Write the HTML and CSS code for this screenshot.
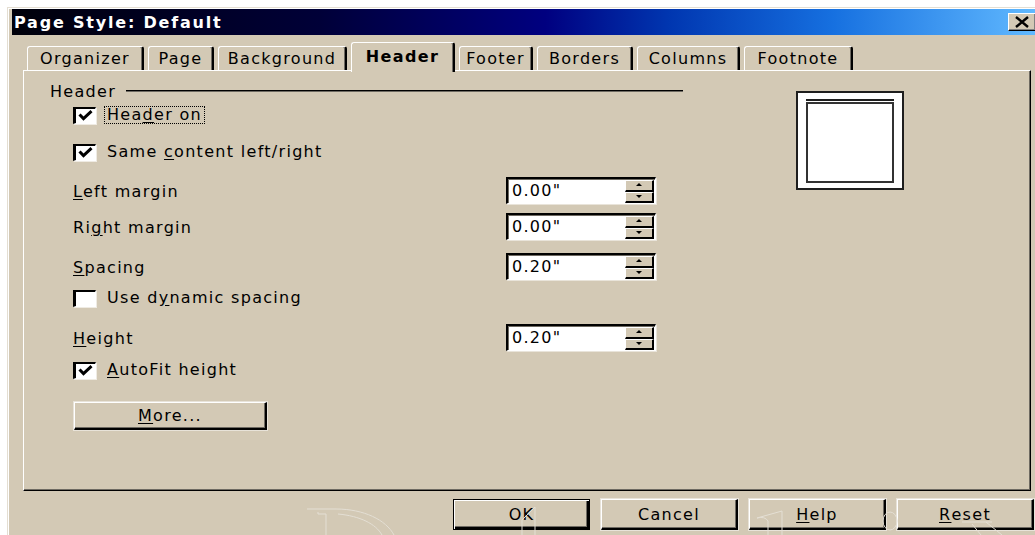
FILE: index.html
```html
<!DOCTYPE html>
<html lang="en">
<head>
<meta charset="utf-8">
<title>Page Style: Default</title>
<link rel="stylesheet" href="styles.css">
</head>
<body>
<div class="window">
  <div class="titlebar">
    <span class="title">Page Style: Default</span>
    <div class="close" aria-label="Close">
      <svg width="16" height="12" viewBox="0 0 16 12"><path d="M2 1 L14 11 M14 1 L2 11" stroke="#000" stroke-width="2.4" fill="none"/></svg>
    </div>
  </div>

  <div class="tabs">
    <div class="tab tab-organizer">Organizer</div>
    <div class="tab tab-page">Page</div>
    <div class="tab tab-background">Background</div>
    <div class="tab tab-header active">Header</div>
    <div class="tab tab-footer">Footer</div>
    <div class="tab tab-borders">Borders</div>
    <div class="tab tab-columns">Columns</div>
    <div class="tab tab-footnote">Footnote</div>
  </div>

  <div class="panel">
    <div class="form">
      <div class="group-title"><span>Header</span><span class="rule"></span></div>
      <div class="rows">
        <div class="row check gap-4">
          <span class="box checked"></span>
          <span class="label focus">Hea<u>d</u>er on</span>
        </div>
        <div class="row check gap-13">
          <span class="box checked"></span>
          <span class="label">Same <u>c</u>ontent left/right</span>
        </div>
        <div class="row field gap-13">
          <span class="field-label"><u>L</u>eft margin</span>
          <div class="spin"><span class="value">0.00"</span><span class="spin-btns"><span class="up"></span><span class="down"></span></span></div>
        </div>
        <div class="row field gap-9">
          <span class="field-label">Ri<u>g</u>ht margin</span>
          <div class="spin"><span class="value">0.00"</span><span class="spin-btns"><span class="up"></span><span class="down"></span></span></div>
        </div>
        <div class="row field gap-13">
          <span class="field-label"><u>S</u>pacing</span>
          <div class="spin"><span class="value">0.20"</span><span class="spin-btns"><span class="up"></span><span class="down"></span></span></div>
        </div>
        <div class="row check gap-6">
          <span class="box"></span>
          <span class="label">Use d<u>y</u>namic spacing</span>
        </div>
        <div class="row field gap-14">
          <span class="field-label"><u>H</u>eight</span>
          <div class="spin"><span class="value">0.20"</span><span class="spin-btns"><span class="up"></span><span class="down"></span></span></div>
        </div>
        <div class="row check gap-7">
          <span class="box checked"></span>
          <span class="label"><u>A</u>utoFit height</span>
        </div>
        <div class="btn more"><u>M</u>ore...</div>
      </div>
    </div>
    <div class="preview">
      <div class="pv-head"></div>
      <div class="pv-body"></div>
    </div>
  </div>

  <div class="buttons">
    <div class="btn default">OK</div>
    <div class="btn">Cancel</div>
    <div class="btn"><u>H</u>elp</div>
    <div class="btn"><u>R</u>eset</div>
  </div>
</div>

<svg class="watermark" width="1035" height="535" viewBox="0 0 1035 535">
  <g fill="none" stroke="#e4dfd4" stroke-width="1">
    <path d="M307 509 H336 C364 509 386 520 394 535"/>
    <path d="M318 512 V514 H326 V535"/>
    <path d="M338 514 C360 516 376 524 382 535"/>
    <path d="M522 535 V520 L535 507 V535"/>
    <path d="M768 535 V521 Q765 516 757 518 L782 511 V535"/>
    <ellipse cx="890" cy="521" rx="7" ry="9"/>
    <path d="M962 522 H992 M972 524 L981 535 M986 522 L1002 535"/>
  </g>
</svg>
</body>
</html>
```

FILE: styles.css
```css
html, body {
  margin: 0;
  padding: 0;
}

body {
  position: relative;
  width: 1035px;
  height: 535px;
  overflow: hidden;
  background: #ffffff;
  font-family: "DejaVu Sans", Verdana, sans-serif;
  font-size: 16px;
  letter-spacing: 1.3px;
  color: #000;
}

u {
  text-decoration: underline;
  text-underline-offset: 2px;
}

/* dialog frame */
.window {
  position: relative;
  box-sizing: border-box;
  width: 1040px;
  height: 540px;
  margin: 7px 0 0 7px;
  padding: 1px 0 0 4px;
  background: #d3c9b5;
  border-top: 1px solid #e4ded2;
  border-left: 1px solid #e4ded2;
  box-shadow: inset 1px 1px 0 #ffffff;
}

/* caption */
.titlebar {
  box-sizing: border-box;
  width: 1026px;
  height: 26px;
  padding-left: 2px;
  display: flex;
  align-items: center;
  background: linear-gradient(to right, #00000a 0%, #000038 30%, #000080 52%, #0036b0 64%, #1670e0 80%, #62baff 100%);
  color: #ffffff;
}

.title {
  font-weight: bold;
  font-size: 16px;
  letter-spacing: 1.8px;
}

.close {
  box-sizing: border-box;
  margin-left: auto;
  margin-right: 2px;
  width: 28px;
  height: 18px;
  display: flex;
  align-items: center;
  justify-content: center;
  background: #d3c9b5;
  border-top: 1px solid #ffffff;
  border-left: 1px solid #ffffff;
  border-right: 1px solid #000;
  border-bottom: 1px solid #000;
  box-shadow: inset -1px -1px 0 #808080;
}

/* tab strip */
.tabs {
  height: 35px;
  margin-left: 15px;
  display: flex;
  align-items: flex-end;
  gap: 4px;
}

.tab {
  box-sizing: border-box;
  height: 24px;
  display: flex;
  align-items: center;
  justify-content: center;
  border-top: 1px solid #ffffff;
  border-left: 1px solid #ffffff;
  border-right: 2px solid #000;
  border-radius: 3px 3px 0 0;
  box-shadow: inset -1px 0 0 #6e6a62;
  background: #d3c9b5;
}

.tab.active {
  position: relative;
  z-index: 1;
  height: 30px;
  margin-bottom: -2px;
  padding-bottom: 3px;
  font-weight: bold;
  letter-spacing: 1.4px;
}

.tab-organizer { width: 117px; }
.tab-page { width: 66px; }
.tab-background { width: 129px; }
.tab-header { width: 104px; }
.tab-footer { width: 74px; }
.tab-borders { width: 96px; }
.tab-columns { width: 103px; }
.tab-footnote { width: 109px; }

/* page */
.panel {
  box-sizing: border-box;
  width: 1008px;
  height: 421px;
  margin-left: 11px;
  padding: 12px 0 0 26px;
  display: flex;
  align-items: flex-start;
  border: 1px solid;
  border-color: #ffffff #000 #000 #ffffff;
  box-shadow: inset -1px -1px 0 #6e6a62;
}

.form {
  width: 633px;
}

.group-title {
  height: 16px;
  display: flex;
  align-items: center;
}

.rule {
  flex: 1;
  height: 1px;
  margin-left: 10px;
  background: #000;
  border-bottom: 1px solid #6e6a62;
}

.rows {
  padding-left: 23px;
}

.row {
  display: flex;
  align-items: center;
}

.row.check { height: 24px; }
.row.field { height: 27px; }

.gap-4 { margin-top: 4px; }
.gap-6 { margin-top: 6px; }
.gap-7 { margin-top: 7px; }
.gap-9 { margin-top: 9px; }
.gap-13 { margin-top: 13px; }
.gap-14 { margin-top: 14px; }

/* checkbox */
.box {
  position: relative;
  box-sizing: border-box;
  flex: none;
  width: 23px;
  height: 17px;
  background: #ffffff;
  border-top: 2px solid #000;
  border-left: 3px solid #000;
  border-right: 1px solid #ffffff;
  border-bottom: 1px solid #ffffff;
  box-shadow: 1px 1px 0 #efebe3;
}

.box.checked::after {
  content: "";
  position: absolute;
  left: 2px;
  top: 1px;
  width: 15px;
  height: 11px;
  background: no-repeat center / 15px 11px url("data:image/svg+xml;utf8,<svg xmlns='http://www.w3.org/2000/svg' width='15' height='11' viewBox='0 0 15 11'><path d='M1.5 4.5 L5.5 8.6 L13.5 1.2' fill='none' stroke='black' stroke-width='3'/></svg>");
}

.label {
  margin-left: 11px;
  line-height: 16px;
}

.label.focus {
  margin-left: 8px;
  padding: 0 2px;
  border: 1px dotted #000;
}

/* spin fields */
.field-label {
  width: 433px;
  flex: none;
  padding-top: 2px;
}

.spin {
  box-sizing: border-box;
  width: 150px;
  height: 27px;
  display: flex;
  background: #ffffff;
  border-top: 2px solid #000;
  border-left: 2px solid #000;
  border-right: 1px solid #ffffff;
  border-bottom: 1px solid #ffffff;
  box-shadow: inset 1px 1px 0 #6e6a62, 1px 1px 0 #e9e4da;
}

.value {
  flex: 1;
  padding-left: 4px;
  line-height: 24px;
}

.spin-btns {
  width: 29px;
  display: flex;
  flex-direction: column;
  margin: 1px 1px 0 0;
}

.up, .down {
  position: relative;
  box-sizing: border-box;
  flex: 1;
  background: #d3c9b5;
  border-top: 1px solid #ffffff;
  border-left: 1px solid #ffffff;
  border-right: 2px solid #000;
  border-bottom: 2px solid #000;
}

.up::after, .down::after {
  content: "";
  position: absolute;
  left: 50%;
  top: 50%;
  margin-left: -3px;
  margin-top: -2px;
  border-left: 3px solid transparent;
  border-right: 3px solid transparent;
}

.up::after { border-bottom: 3px solid #000; }
.down::after { border-top: 3px solid #000; }

/* push buttons */
.btn {
  box-sizing: border-box;
  display: flex;
  align-items: center;
  justify-content: center;
  background: #d3c9b5;
  border-top: 1px solid #ffffff;
  border-left: 1px solid #ffffff;
  border-right: 2px solid #000;
  border-bottom: 2px solid #000;
  box-shadow: inset -1px -1px 0 #6e6a62;
  outline: 1px solid #e8e3d9;
  outline-offset: 0;
}

.btn.more {
  width: 193px;
  height: 28px;
  margin-top: 20px;
  margin-left: 1px;
}

.buttons {
  display: flex;
  gap: 11px;
  margin: 8px 0 0 441px;
}

.buttons .btn {
  width: 137px;
  height: 31px;
}

.btn.default {
  border: 1px solid #000;
  box-shadow: inset 1px 1px 0 #ffffff, inset -2px -2px 0 #000, inset -3px -3px 0 #6e6a62;
  outline: none;
}

/* page preview */
.preview {
  box-sizing: border-box;
  width: 108px;
  height: 99px;
  margin: 8px 0 0 113px;
  padding: 6px 8px 0;
  background: #ffffff;
  border: 2px solid #1e1e1e;
}

.pv-head {
  height: 2px;
  background: #1e1e1e;
}

.pv-body {
  box-sizing: border-box;
  height: 81px;
  margin-top: 1px;
  border: 2px solid #333;
}

/* faint scan watermark strokes */
.watermark {
  position: absolute;
  left: 0;
  top: 0;
  pointer-events: none;
}
```
